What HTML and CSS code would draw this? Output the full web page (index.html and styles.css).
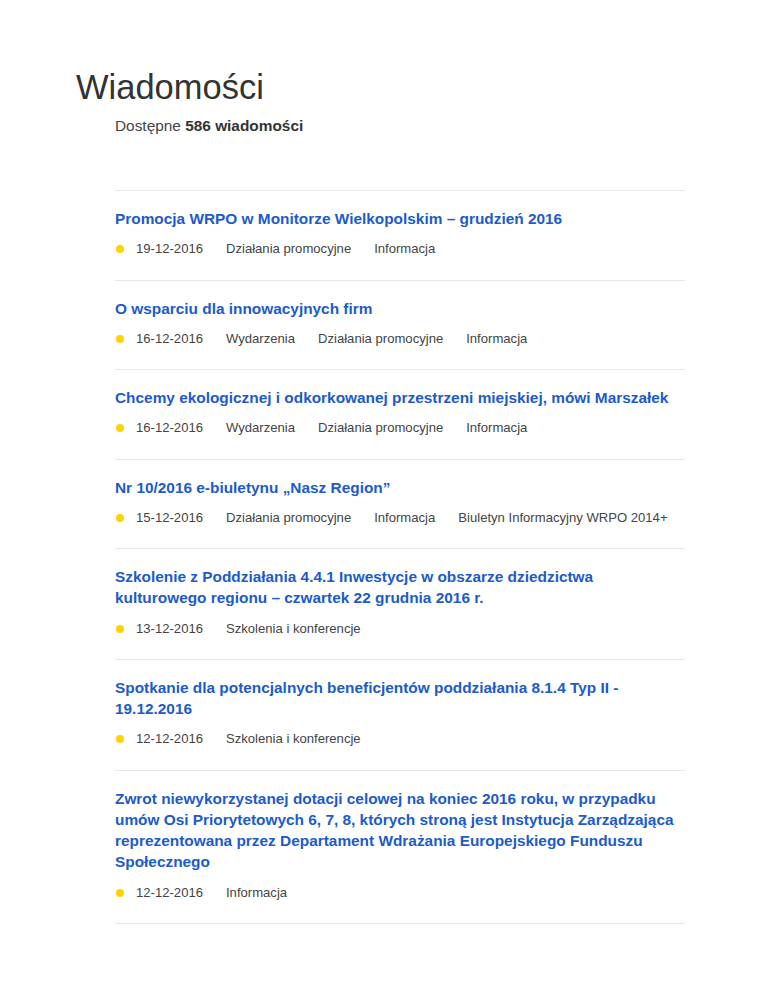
FILE: index.html
```html
<!doctype html>
<html lang="pl">
<head>
    <meta charset="UTF-8">
    <meta name="viewport" content="width=device-width, initial-scale=1.0">
    <title>Wiadomości</title>
    <link rel="stylesheet" href="styles.css">
</head>
<body>
    <div class="page">
        <h1 class="page-title">Wiadomości</h1>
        <div class="content">
            <p class="count">Dostępne <b>586 wiadomości</b></p>

            <!--lista wiadomości-->
            <ul class="news">
                <li class="item">
                    <a class="item-title" href="#">Promocja WRPO w Monitorze Wielkopolskim – grudzień 2016</a>
                    <div class="meta">
                        <span class="dot"></span>
                        <span>19-12-2016</span>
                        <span>Działania promocyjne</span>
                        <span>Informacja</span>
                    </div>
                </li>
                <li class="item">
                    <a class="item-title" href="#">O wsparciu dla innowacyjnych firm</a>
                    <div class="meta">
                        <span class="dot"></span>
                        <span>16-12-2016</span>
                        <span>Wydarzenia</span>
                        <span>Działania promocyjne</span>
                        <span>Informacja</span>
                    </div>
                </li>
                <li class="item">
                    <a class="item-title" href="#">Chcemy ekologicznej i odkorkowanej przestrzeni miejskiej, mówi Marszałek</a>
                    <div class="meta">
                        <span class="dot"></span>
                        <span>16-12-2016</span>
                        <span>Wydarzenia</span>
                        <span>Działania promocyjne</span>
                        <span>Informacja</span>
                    </div>
                </li>
                <li class="item">
                    <a class="item-title" href="#">Nr 10/2016 e-biuletynu „Nasz Region”</a>
                    <div class="meta">
                        <span class="dot"></span>
                        <span>15-12-2016</span>
                        <span>Działania promocyjne</span>
                        <span>Informacja</span>
                        <span>Biuletyn Informacyjny WRPO 2014+</span>
                    </div>
                </li>
                <li class="item">
                    <a class="item-title" href="#">Szkolenie z Poddziałania 4.4.1 Inwestycje w obszarze dziedzictwa kulturowego regionu – czwartek 22 grudnia 2016 r.</a>
                    <div class="meta">
                        <span class="dot"></span>
                        <span>13-12-2016</span>
                        <span>Szkolenia i konferencje</span>
                    </div>
                </li>
                <li class="item">
                    <a class="item-title" href="#">Spotkanie dla potencjalnych beneficjentów poddziałania 8.1.4 Typ II - 19.12.2016</a>
                    <div class="meta">
                        <span class="dot"></span>
                        <span>12-12-2016</span>
                        <span>Szkolenia i konferencje</span>
                    </div>
                </li>
                <li class="item">
                    <a class="item-title" href="#">Zwrot niewykorzystanej dotacji celowej na koniec 2016 roku, w przypadku umów Osi Priorytetowych 6, 7, 8, których stroną jest Instytucja Zarządzająca reprezentowana przez Departament Wdrażania Europejskiego Funduszu Społecznego</a>
                    <div class="meta">
                        <span class="dot"></span>
                        <span>12-12-2016</span>
                        <span>Informacja</span>
                    </div>
                </li>
            </ul>
        </div>
    </div>
</body>
</html>
```

FILE: styles.css
```css
body,ul,p,h1{
    margin: 0;
}
ul{
    padding-left: 0;
    list-style: none;
}
body{
    font-family: "Liberation Sans", Arial, sans-serif;
    color: #333;
    background: #fff;
}
/*strona*/
.page{
    padding: 67px 0 40px 76px;
}
.page-title{
    font-size: 34.5px;
    line-height: 40px;
    font-weight: normal;
    color: #333;
}
/*kolumna z listą*/
.content{
    width: 570px;
    margin: 9px 0 0 39px;
}
.count{
    font-size: 15.4px;
    line-height: 20px;
    color: #444;
    margin-bottom: 54px;
}
.count b{
    color: #333;
}
/*wiadomości*/
.news{
    border-top: 1px solid #e8e8e8;
}
.item{
    padding: 17px 0 21.25px;
    border-bottom: 1px solid #e8e8e8;
}
.item-title{
    display: block;
    font-size: 15.4px;
    line-height: 21.25px;
    font-weight: bold;
    color: #1c5bc9;
    text-decoration: none;
    margin-bottom: 11px;
}
.meta{
    display: flex;
    align-items: center;
    gap: 23px;
    font-size: 13.1px;
    line-height: 18px;
    color: #444;
}
/*żółta kropka*/
.dot{
    width: 8px;
    height: 8px;
    border-radius: 50%;
    background: #ffd200;
    margin: 0 -11px 0 1px;
}
```
